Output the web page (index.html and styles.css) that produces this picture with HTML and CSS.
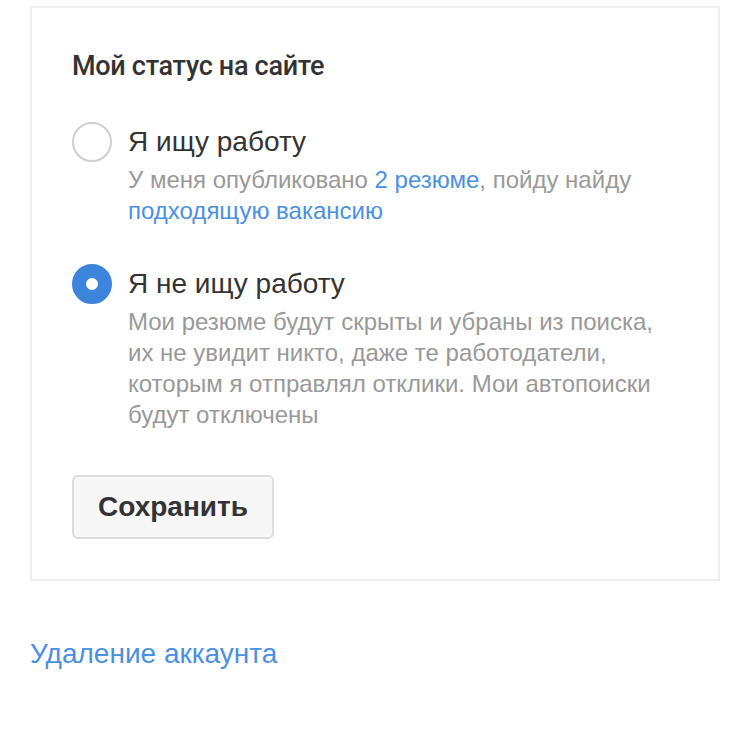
FILE: index.html
```html
<!DOCTYPE html>
<html lang="ru">
<head>
  <meta charset="UTF-8" />
  <meta name="viewport" content="width=device-width, initial-scale=1.0"/>
  <title>Мой статус на сайте</title>
  <link rel="stylesheet" href="styles.css">
</head>
<body>

  <div class="card">
    <h2 class="title">Мой статус на сайте</h2>

    <div class="option">
      <span class="radio"></span>
      <div class="option-text">
        <div class="label">Я ищу работу</div>
        <p class="desc">У меня опубликовано <a href="#">2 резюме</a>, пойду найду <a href="#">подходящую вакансию</a></p>
      </div>
    </div>

    <div class="option">
      <span class="radio checked"></span>
      <div class="option-text">
        <div class="label">Я не ищу работу</div>
        <p class="desc">Мои резюме будут скрыты и убраны из поиска, их не увидит никто, даже те работодатели, которым я отправлял отклики. Мои автопоиски будут отключены</p>
      </div>
    </div>

    <button class="save">Сохранить</button>
  </div>

  <a class="delete" href="#">Удаление аккаунта</a>

</body>
</html>
```

FILE: styles.css
```css
body {
  font-family: "Liberation Sans", Arial, sans-serif;
  background-color: #fff;
  color: #333;
  margin: 0;
  padding: 6px 30px 0 30px;
}

a {
  color: #4a90e2;
  text-decoration: none;
}

.card {
  width: 690px;
  box-sizing: border-box;
  border: 2px solid #eeeeee;
  padding: 43px 40px 40px 40px;
}

.title {
  font-family: Roboto, sans-serif;
  font-weight: 500;
  font-size: 27px;
  line-height: 30px;
  letter-spacing: -0.3px;
  margin: 0 0 41px 0;
  color: #333;
}

.option {
  display: flex;
  gap: 16px;
  margin-bottom: 38px;
}

.radio {
  flex: none;
  width: 40px;
  height: 40px;
  box-sizing: border-box;
  border: 2px solid #cfcfcf;
  border-radius: 50%;
  background: #fff;
}

.radio.checked {
  border: 14px solid #3d84dd;
  background: #fff;
}

.label {
  font-size: 28px;
  line-height: 40px;
}

.desc {
  margin: 2px 0 0 0;
  font-size: 24px;
  line-height: 31px;
  color: #999;
  max-width: 535px;
}

.save {
  display: block;
  margin-top: 45px;
  height: 64px;
  padding: 0 24px;
  font-family: "Liberation Sans", Arial, sans-serif;
  font-size: 28px;
  font-weight: bold;
  color: #333;
  background: #f7f7f7;
  border: 2px solid #dddddd;
  border-radius: 6px;
  cursor: pointer;
}

.delete {
  display: inline-block;
  margin-top: 58px;
  font-size: 28px;
  line-height: 30px;
}
```
